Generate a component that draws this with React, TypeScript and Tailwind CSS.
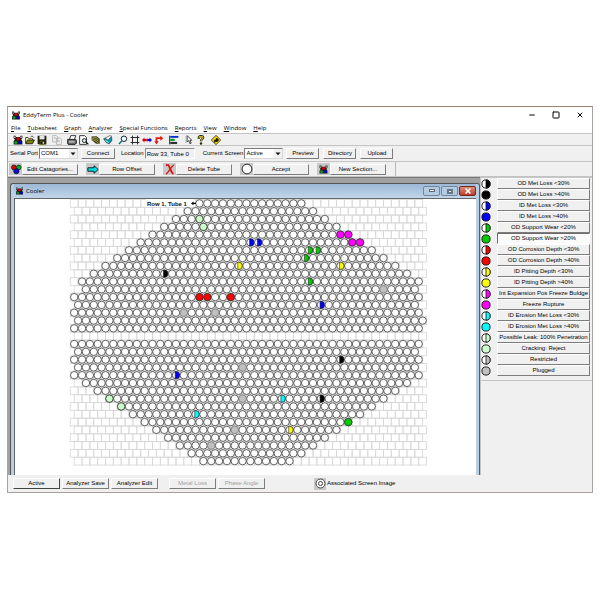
import React, { useState } from 'react';
import type { ReactNode } from 'react';
import { Minus, Square, X } from 'lucide-react';

const PITCH_X = 7.83;
const PITCH_Y = 7.81;
const ORIGIN_X = 59.2;
const ORIGIN_Y = 4.4;
const COLUMNS = 45;

// first and last tube of every row, null is the divider lane
const ROWS: ([number, number] | null)[] = [
  [16, 29], [14, 30], [13, 32], [11, 33], [10, 35], [8, 36], [7, 38], [5, 39], [4, 41],
  [2, 42], [1, 44], [1, 43], [0, 44], [0, 43], [0, 44], [0, 44], [0, 44], null,
  [0, 44], [0, 43], [0, 44], [0, 43], [0, 44], [1, 42], [3, 41], [4, 39], [6, 38],
  [7, 36], [9, 35], [10, 33], [12, 32], [13, 30], [15, 29], [16, 27],
];

type Marker = { row: number; col: number; color: string; half?: boolean };

const MARKERS: Marker[] = [
  { row: 2, col: 16, color: '#ccffcc' },
  { row: 3, col: 16, color: '#ccffcc' },
  { row: 4, col: 34, color: '#ff00ff' },
  { row: 4, col: 35, color: '#ff00ff' },
  { row: 5, col: 35, color: '#ff00ff' },
  { row: 5, col: 36, color: '#ff00ff' },
  { row: 5, col: 22, color: '#0000ff', half: true },
  { row: 5, col: 23, color: '#0000ff', half: true },
  { row: 6, col: 30, color: '#00cc00', half: true },
  { row: 6, col: 31, color: '#00cc00', half: true },
  { row: 7, col: 29, color: '#00cc00', half: true },
  { row: 8, col: 21, color: '#ffff00', half: true },
  { row: 8, col: 34, color: '#ffff00', half: true },
  { row: 9, col: 11, color: '#000000', half: true },
  { row: 10, col: 30, color: '#00cc00', half: true },
  { row: 11, col: 39, color: '#c0c0c0' },
  { row: 12, col: 16, color: '#ff0000' },
  { row: 12, col: 17, color: '#ff0000' },
  { row: 12, col: 20, color: '#ff0000' },
  { row: 13, col: 31, color: '#0000ff', half: true },
  { row: 14, col: 14, color: '#c0c0c0' },
  { row: 14, col: 18, color: '#c0c0c0' },
  { row: 20, col: 34, color: '#000000', half: true },
  { row: 21, col: 21, color: '#c0c0c0' },
  { row: 22, col: 13, color: '#0000ff', half: true },
  { row: 25, col: 4, color: '#ccffcc' },
  { row: 25, col: 21, color: '#c0c0c0' },
  { row: 25, col: 26, color: '#00ffff', half: true },
  { row: 25, col: 31, color: '#000000', half: true },
  { row: 26, col: 6, color: '#ccffcc' },
  { row: 27, col: 15, color: '#00ffff', half: true },
  { row: 28, col: 35, color: '#00cc00' },
  { row: 29, col: 20, color: '#c0c0c0' },
  { row: 29, col: 27, color: '#ffff00', half: true },
  { row: 31, col: 17, color: '#c0c0c0' },
];

const CATEGORIES = [
  { label: 'OD Met Loss <30%', color: '#000000', half: true },
  { label: 'OD Met Loss >40%', color: '#000000', half: false },
  { label: 'ID Met Loss <30%', color: '#0000ff', half: true },
  { label: 'ID Met Loss >40%', color: '#0000ff', half: false },
  { label: 'OD Support Wear <20%', color: '#00cc00', half: true },
  { label: 'OD Support Wear >20%', color: '#00cc00', half: false },
  { label: 'OD Corrosion Depth <30%', color: '#ff0000', half: true },
  { label: 'OD Corrosion Depth >40%', color: '#ff0000', half: false },
  { label: 'ID Pitting Depth <30%', color: '#ffff00', half: true },
  { label: 'ID Pitting Depth >40%', color: '#ffff00', half: false },
  { label: 'Int Expansion Pos Freeze Buldge', color: '#ff00ff', half: true },
  { label: 'Freeze Rupture', color: '#ff00ff', half: false },
  { label: 'ID Erosion Met Loss <30%', color: '#00ffff', half: true },
  { label: 'ID Erosion Met Loss >40%', color: '#00ffff', half: false },
  { label: 'Possible Leak: 100% Penetration', color: '#ccffcc', half: true },
  { label: 'Cracking: Reject', color: '#ccffcc', half: false },
  { label: 'Restricted', color: '#c0c0c0', half: true },
  { label: 'Plugged', color: '#c0c0c0', half: false },
];

const MENU = ['File', 'Tubesheet', 'Graph', 'Analyzer', 'Special Functions', 'Reports', 'View', 'Window', 'Help'];

const tubeX = (row: number, col: number) => ORIGIN_X + (row % 2 ? PITCH_X / 2 : 0) + col * PITCH_X;
const tubeY = (row: number) => ORIGIN_Y + row * PITCH_Y;

function TubeSheet() {
  return (
    <svg width="420" height="268" viewBox="0 0 420 268" className="block max-w-full">
      {ROWS.map((_, row) => (
        <g key={row} fill="none" stroke="#d9d9d9" strokeWidth="0.9">
          {Array.from({ length: COLUMNS }, (_, col) => (
            <rect key={col} x={tubeX(row, col) - PITCH_X / 2} y={tubeY(row) - PITCH_Y / 2} width={PITCH_X} height={PITCH_Y} />
          ))}
        </g>
      ))}
      {ROWS.map((range, row) =>
        range
          ? Array.from({ length: range[1] - range[0] + 1 }, (_, i) => (
              <circle key={`${row}-${i}`} cx={tubeX(row, range[0] + i)} cy={tubeY(row)} r="3.7" fill="#fff" stroke="#3c3c3c" strokeWidth="0.8" />
            ))
          : null
      )}
      {MARKERS.map(({ row, col, color, half }) => {
        const x = tubeX(row, col);
        const y = tubeY(row);
        return half ? (
          <path key={`${row}-${col}`} d={`M${x - 0.8} ${y - 3.6} h0.8 a3.6 3.6 0 0 1 0 7.2 h-0.8 z`} fill={color} stroke="#222" strokeWidth="0.6" />
        ) : (
          <circle key={`${row}-${col}`} cx={x} cy={y} r="3.7" fill={color} stroke={color === '#c0c0c0' ? '#8a8a8a' : '#333'} strokeWidth="0.8" />
        );
      })}
      <rect x="131" y="0" width="48" height="8" fill="#fff" />
      <text x="132" y="7" fontSize="6" fontWeight="700" fill="#111" fontFamily="Liberation Sans, sans-serif">Row 1, Tube 1</text>
      <path d="M176 4.400 l2.500 -1.800 v1.200 h2.500 v1.200 h-2.500 v1.200 z" fill="#000" />
    </svg>
  );
}

function Dot({ color, half }: { color: string; half: boolean }) {
  return (
    <svg viewBox="0 0 10 10" className="w-[10px] h-[10px] shrink-0">
      <circle cx="5" cy="5" r="4.1" fill={half ? '#fff' : color} stroke="#111" strokeWidth="0.9" />
      {half && <path d="M5 0.9 a4.1 4.1 0 0 1 0 8.2 z" fill={color} stroke="#111" strokeWidth="0.8" />}
    </svg>
  );
}

function Icon({ children, className = 'w-[10px] h-[10px]' }: { children: ReactNode; className?: string }) {
  return <svg viewBox="0 0 16 16" className={`block shrink-0 ${className}`}>{children}</svg>;
}

function ClusterIcon({ className }: { className?: string }) {
  return (
    <Icon className={className}>
      <path d="M1 1h3l1 2h6l1-2h3v4l-2 2 2 3v5H1v-5l2-3-2-2z" fill="#1a1a1a" />
      <circle cx="3" cy="3.500" r="1.500" fill="#aaa" />
      <circle cx="13" cy="3.500" r="1.500" fill="#aaa" />
      <circle cx="8" cy="6" r="2.600" fill="#e00000" />
      <circle cx="4.500" cy="12" r="2.500" fill="#00a020" />
      <circle cx="11.500" cy="12" r="2.500" fill="#0000e0" />
    </Icon>
  );
}

const TOOLS: ReactNode[][] = [
  [
    <ClusterIcon />,
    <Icon>
      <path d="M1 13V4h4l1 2h6v2" fill="#ffffa0" stroke="#222" strokeWidth="1.3" />
      <path d="M1 14l3-6h11l-3 6z" fill="#808000" stroke="#111" strokeWidth="1.3" />
      <path d="M9 3c2-2 4-1 5 1" fill="none" stroke="#111" strokeWidth="1.2" />
    </Icon>,
    <Icon>
      <path d="M1 1h14v14H3l-2-2z" fill="#202010" />
      <path d="M4 1h8v6H4z" fill="#e8e8e0" />
      <path d="M5 10h6v5H5z" fill="#111" stroke="#808000" />
      <path d="M9 11h2v3H9z" fill="#eee" />
    </Icon>,
  ],
  [
    <Icon>
      <path d="M1 1h6l2 2v8H1zM7 5h6l2 2v8H7z" fill="#f4f4f4" stroke="#a8a8a8" strokeWidth="1.2" />
      <path d="M3 4h3M3 6h3M9 9h4M9 11h4" stroke="#b0b0b0" />
    </Icon>,
  ],
  [
    <Icon>
      <path d="M4 7l2-6h8l-2 6" fill="#fff" stroke="#111" strokeWidth="1.3" />
      <path d="M1 7h13l1 2v4l-2 2H2l-1-2z" fill="#707070" stroke="#111" strokeWidth="1.4" />
      <path d="M3 11h9" stroke="#eee" strokeWidth="1.4" />
    </Icon>,
    <Icon>
      <path d="M1 1h8l3 3v11H1z" fill="#fff" stroke="#222" strokeWidth="1.4" />
      <circle cx="8.5" cy="9" r="3.2" fill="#cfe8e8" stroke="#111" strokeWidth="1.4" />
      <path d="M11 11l4 4" stroke="#111" strokeWidth="2" />
    </Icon>,
    <Icon>
      <path d="M1 2h8l5 4v8H8L1 8z" fill="#44441c" />
      <path d="M2 3l6 1 4 3M2 5l6 2 4 3M2 7l6 3 4 3" stroke="#c8c060" strokeWidth="1" fill="none" />
    </Icon>,
    <Icon>
      <path d="M1 6l4 6 5 2 4-5V4z" fill="#00a0b0" stroke="#124" strokeWidth="1" />
      <path d="M3 5l5 3 6-6-3-1z" fill="#fff" stroke="#333" strokeWidth="1" />
      <path d="M4 9l5 3" stroke="#fff" strokeWidth="1.4" />
    </Icon>,
  ],
  [
    <Icon>
      <circle cx="9.5" cy="6" r="4.4" fill="#e8ffff" stroke="#223" strokeWidth="1.6" />
      <path d="M6 9.5L1.5 14.5" stroke="#007a80" strokeWidth="2.4" />
    </Icon>,
    <Icon>
      <path d="M4 1v14M12 1v14M1 4h14M1 12h14" stroke="#222" strokeWidth="1.5" />
    </Icon>,
    <Icon>
      <path d="M0 8l4-4v2.500h3v3H4V12z" fill="#e00000" />
      <path d="M16 8l-4-4v2.500H9v3h3V12z" fill="#0000dd" />
      <path d="M5.500 8l2-3v6z" fill="#e00000" />
      <path d="M10.500 8l-2-3v6z" fill="#0000dd" />
    </Icon>,
    <Icon>
      <path d="M4 12V5h7" stroke="#e02010" strokeWidth="3" fill="none" />
      <path d="M10 1v8l5-4zM0.500 10h7L4 15z" fill="#e02010" />
    </Icon>,
  ],
  [
    <Icon className="w-[12px] h-[10px]">
      <path d="M1 1v14" stroke="#222" strokeWidth="1.5" />
      <path d="M2 1.500h13v3H2z" fill="#0030d0" />
      <path d="M2 6h7v3.500H2z" fill="#00a020" />
      <path d="M2 11h11v3.500H2z" fill="#303030" />
    </Icon>,
  ],
  [
    <Icon>
      <path d="M5 1v10l2.500-2 2 5 2-1-2-4.500h3z" fill="#fff" stroke="#222" strokeWidth="1.3" />
      <path d="M3 2v12" stroke="#888" strokeDasharray="2 1" />
    </Icon>,
    <Icon>
      <path d="M4.500 6V4c0-3 7-3 7 0s-3.500 2.500-3.500 6" stroke="#111" strokeWidth="3.600" fill="none" />
      <path d="M4.700 5V4c0-2.500 6.500-2.500 6.500 0S8 6.500 8 10" stroke="#c8b400" strokeWidth="1.800" fill="none" />
      <circle cx="8" cy="13.500" r="2" fill="#333300" />
    </Icon>,
  ],
  [
    <Icon>
      <path d="M8 0.500L15.500 8 8 15.500 0.500 8z" fill="#f0d000" stroke="#222" strokeWidth="1.2" />
      <path d="M6 12V8h4M9 5l3 3-3 3z" stroke="#111" strokeWidth="1.500" fill="#111" />
    </Icon>,
  ],
];

const ACTIONS = [
  {
    label: 'Edit Catagories...',
    icon: (
      <Icon className="w-[12px] h-[11px]">
        <circle cx="5" cy="5" r="3.600" fill="#e00000" stroke="#111" />
        <circle cx="12" cy="5" r="3.400" fill="#00b020" stroke="#111" />
        <circle cx="8.500" cy="10.500" r="3.800" fill="#1010d0" stroke="#111" />
      </Icon>
    ),
  },
  {
    label: 'Row Offset',
    icon: (
      <Icon className="w-[12px] h-[11px]">
        <path d="M0.500 5.500h9V2.500L15.500 8l-6 5.500v-3h-9z" fill="#00e0e8" stroke="#111" strokeWidth="1.300" />
      </Icon>
    ),
  },
  {
    label: 'Delete Tube',
    icon: (
      <Icon className="w-[12px] h-[11px]">
        <path d="M2 1.500h3.500C8 4 9 12 13 14.500" stroke="#e01010" strokeWidth="2.600" fill="none" />
        <path d="M14 1.500C10 2 6 13 2 14.500" stroke="#e01010" strokeWidth="1.900" fill="none" />
      </Icon>
    ),
  },
  {
    label: 'Accept',
    icon: (
      <Icon className="w-[12px] h-[12px]">
        <circle cx="8" cy="8" r="6.500" fill="#fff" stroke="#222" strokeWidth="1.300" />
      </Icon>
    ),
  },
  { label: 'New Section...', icon: <ClusterIcon className="w-[9px] h-[9px]" /> },
];

const raised = 'border-t border-l border-t-white border-l-white border-b border-r border-b-[#7c7c7c] border-r-[#7c7c7c] bg-[#f0f0f0]';

function Button({ children, className = '', disabled }: { children: ReactNode; className?: string; disabled?: boolean }) {
  return (
    <button
      disabled={disabled}
      className={`flex items-center justify-center h-[11px] shrink-0 whitespace-nowrap disabled:text-[#a0a0a0] ${raised} ${className}`}
    >
      {children}
    </button>
  );
}

function Dropdown({ id, label, value }: { id: string; label: string; value: string }) {
  return (
    <>
      <label htmlFor={id} className="whitespace-nowrap">{label}</label>
      <div className="relative w-[39px] h-[11px] shrink-0 ml-[1px]">
        <select
          id={id}
          defaultValue={value}
          className="appearance-none block w-full h-full px-[1px] bg-white border border-[#7c7c7c] border-b-[#d8d8d8] border-r-[#d8d8d8] outline-none"
        >
          <option>{value}</option>
        </select>
        <svg viewBox="0 0 8 8" className="absolute right-[1px] top-[1px] w-[8px] h-[9px] bg-[#f0f0f0] pointer-events-none">
          <path d="M1.500 3h5L4 5.800z" fill="#111" />
        </svg>
      </div>
    </>
  );
}

export default function App() {
  const [selected, setSelected] = useState(5);

  return (
    <div className="min-h-screen bg-white pt-[106px] px-[7px] font-['Liberation_Sans',Arial,sans-serif] text-[6px] leading-[9px] text-black">
      <div className="flex flex-col border border-[#a8a09c] border-t-[#96806f] bg-[#f0f0f0] overflow-hidden">
        {/* Title bar */}
        <header className="bg-white font-['Open_Sans','Noto_Sans',sans-serif]">
          <div className="flex items-center h-4 pl-[3px] pr-2">
            <ClusterIcon className="w-[10px] h-[9px]" />
            <h1 className="ml-[2px] flex-1 whitespace-nowrap">EddyTerm Plus - Cooler</h1>
            <div className="flex items-center gap-4">
              <button aria-label="Minimize"><Minus className="block w-2 h-2" strokeWidth={3} /></button>
              <button aria-label="Maximize"><Square className="block w-2 h-2" strokeWidth={3} /></button>
              <button aria-label="Close"><X className="block w-2 h-2" strokeWidth={3} /></button>
            </div>
          </div>
          <nav className="flex items-center h-[10px] pl-[3px] gap-[7px]">
            {MENU.map((item) => (
              <button key={item} className="whitespace-nowrap">
                <span className="underline">{item[0]}</span>{item.slice(1)}
              </button>
            ))}
          </nav>
        </header>

        {/* Icon toolbar */}
        <div className="flex items-center h-3 pl-1 gap-[3px] border-t border-[#c4c4c4]">
          {TOOLS.map((group, g) => (
            <div key={g} className="flex items-center">
              {group.map((tool, i) => (
                <button key={i} className="flex items-center justify-center w-3 h-[10px]">
                  {tool}
                </button>
              ))}
            </div>
          ))}
        </div>

        {/* Connection row */}
        <div className="flex items-center h-4 pl-[2px] border-t border-[#c4c4c4]">
          <Dropdown id="port" label="Serial Port" value="COM1" />
          <Button className="w-[34px] ml-[3px] border-t-[#b0b0b0] border-l-[#b0b0b0]">Connect</Button>
          <label htmlFor="location" className="ml-[6px]">Location</label>
          <input
            id="location"
            readOnly
            defaultValue="Row 33, Tube 0"
            className="w-[50px] h-[11px] ml-[1px] px-[1px] bg-[#f0f0f0] border border-[#8c8c8c] border-r-white border-b-white outline-none"
          />
          <div className="flex items-center ml-2">
            <Dropdown id="screen" label="Current Screen" value="Active" />
          </div>
          <div className="flex gap-1 ml-[3px]">
            <Button className="w-[33px]">Preview</Button>
            <Button className="w-[33px]">Directory</Button>
            <Button className="w-[33px]">Upload</Button>
          </div>
        </div>

        {/* Tube actions */}
        <div className="flex h-4 border-t border-b border-[#c4c4c4]">
          <div className="flex items-center gap-2 pl-[1px] pr-[9px] border-r border-[#b8b8b8]">
            {ACTIONS.map(({ label, icon }) => (
              <div key={label} className="flex items-center">
                <span className="flex items-center justify-center w-[13px] h-3 bg-[#c8c8c8]">{icon}</span>
                <Button className="w-14">{label}</Button>
              </div>
            ))}
          </div>
        </div>

        <div className="flex">
          {/* Workspace */}
          <main className="flex-1 min-w-0 pt-[5px] pl-[2px] bg-[#a2a2a2] border-t border-[#777]">
            <section className="h-full rounded-t-[3px] border border-b-0 border-[#555] border-r-[#1d7188] bg-[#b7cfe6] px-[3px]">
              <div className="flex items-center h-[14px] pl-[1px] bg-linear-to-b from-[#9db9d6] to-[#c0d5ea]">
                <ClusterIcon className="w-[9px] h-[8px]" />
                <h2 className="ml-[2px] flex-1 font-['Open_Sans','Noto_Sans',sans-serif]">Cooler</h2>
                <div className="flex gap-[1px]">
                  <button aria-label="Minimize child" className="flex items-end justify-center w-[17px] h-[10px] pb-[3px] rounded-[2px] border border-[#71869c] bg-[#b4cbe2]">
                    <span className="w-[6px] h-[3px] bg-white border border-[#59697a]" />
                  </button>
                  <button aria-label="Maximize child" className="flex items-center justify-center w-[17px] h-[10px] rounded-[2px] border border-[#71869c] bg-[#b4cbe2]">
                    <span className="w-[6px] h-[5px] bg-white border-2 border-[#667789]" />
                  </button>
                  <button aria-label="Close child" className="flex items-center justify-center w-[17px] h-[10px] rounded-[2px] border border-[#702a20] bg-linear-to-b from-[#dd8a78] to-[#bd3c22] text-white">
                    <X className="w-2 h-2" strokeWidth={5} />
                  </button>
                </div>
              </div>
              <div className="h-[277px] border-t border-l border-[#666] bg-white">
                <TubeSheet />
              </div>
            </section>
          </main>

          {/* Categories */}
          <aside className="w-[112px] shrink-0 border-t border-l border-[#c4c4c4] bg-[#f0f0f0]">
            <ul className="border-b border-[#c4c4c4] pb-1 pr-[2px]">
              {CATEGORIES.map(({ label, color, half }, i) => (
                <li key={label} className="flex items-center gap-[6px] h-[11px]">
                  <Dot color={color} half={half} />
                  <button
                    onClick={() => setSelected(i)}
                    className={`flex-1 h-[11px] flex items-center justify-center whitespace-nowrap border ${
                      i === selected
                        ? 'bg-[#fafafa] border-t-[#6c6c6c] border-l-[#6c6c6c] border-r-white border-b-white'
                        : 'bg-[#f0f0f0] border-t-white border-l-white border-r-[#7c7c7c] border-b-[#7c7c7c]'
                    }`}
                  >
                    {label}
                  </button>
                </li>
              ))}
            </ul>
          </aside>
        </div>

        {/* Status bar */}
        <footer className="flex items-center h-[17px] pl-[5px]">
          <div className="flex gap-[2px]">
            <Button className="w-[47px] border-t-[#444] border-l-[#444] border-b-[#444] border-r-[#444]">Active</Button>
            <Button className="w-[47px]">Analyzer Save</Button>
            <Button className="w-[47px]">Analyzer Edit</Button>
          </div>
          <div className="flex gap-[2px] ml-[11px]">
            <Button className="w-[47px]" disabled>Metal Loss</Button>
            <Button className="w-[47px]" disabled>Phase Angle</Button>
          </div>
          <span className="flex items-center justify-center w-3 h-3 ml-[49px] bg-[#c8c8c8]">
            <Icon className="w-[11px] h-[11px]">
              <circle cx="8" cy="8" r="6.500" fill="#fff" stroke="#222" strokeWidth="1.200" />
              <circle cx="8" cy="8" r="3" fill="#fff" stroke="#222" strokeWidth="1.200" />
            </Icon>
          </span>
          <span className="ml-[1px] whitespace-nowrap">Associated Screen Image</span>
        </footer>
      </div>
    </div>
  );
}
